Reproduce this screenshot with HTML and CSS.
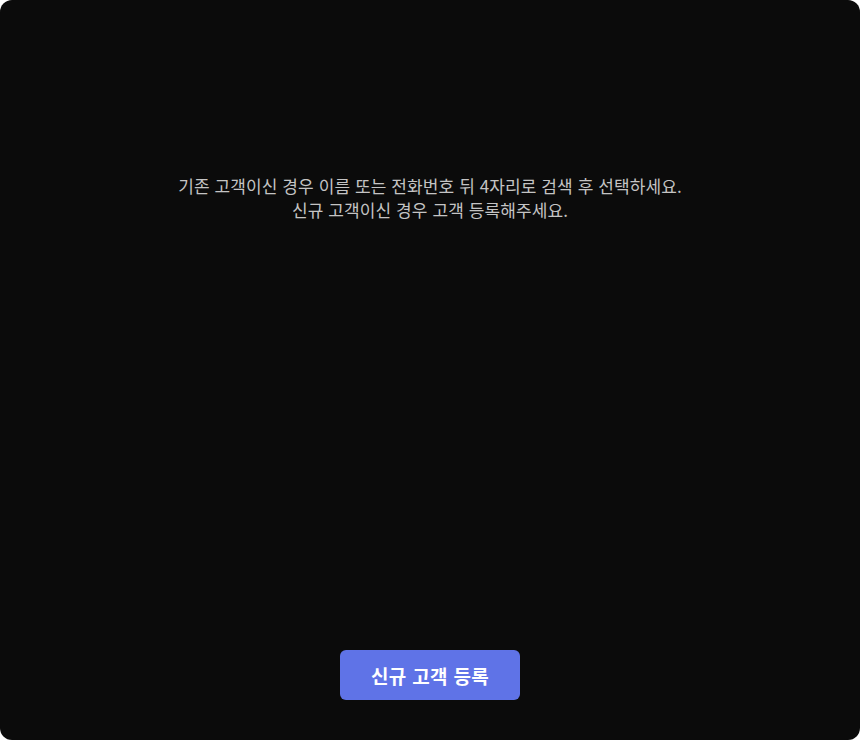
FILE: index.html
```html
<!DOCTYPE html>
<html lang="ko">
<head>
<meta charset="utf-8">
<link rel="stylesheet" href="styles.css">
</head>
<body>
<div class="panel">
  <p class="guide">기존 고객이신 경우 이름 또는 전화번호 뒤 4자리로 검색 후 선택하세요.<br>신규 고객이신 경우 고객 등록해주세요.</p>
  <button class="register">신규 고객 등록</button>
</div>
</body>
</html>
```
FILE: styles.css
```css
html, body {
  margin: 0;
  padding: 0;
  background: #ffffff;
}
.panel {
  width: 860px;
  height: 740px;
  box-sizing: border-box;
  background: #0b0b0b;
  border-radius: 12px;
  display: flex;
  flex-direction: column;
  align-items: center;
  padding: 174px 0 40px;
  font-family: "Noto Sans CJK KR", "Noto Sans", sans-serif;
}
.guide {
  margin: 0;
  color: #c4c4c4;
  font-size: 17px;
  line-height: 24px;
  letter-spacing: 0.1px;
  text-align: center;
}
.register {
  margin-top: auto;
  width: 180px;
  height: 50px;
  border: none;
  border-radius: 6px;
  background: #5f73e7;
  color: #ffffff;
  font-family: "Noto Sans CJK KR", "Noto Sans", sans-serif;
  font-size: 19px;
  font-weight: 700;
  letter-spacing: 0.3px;
}
```
